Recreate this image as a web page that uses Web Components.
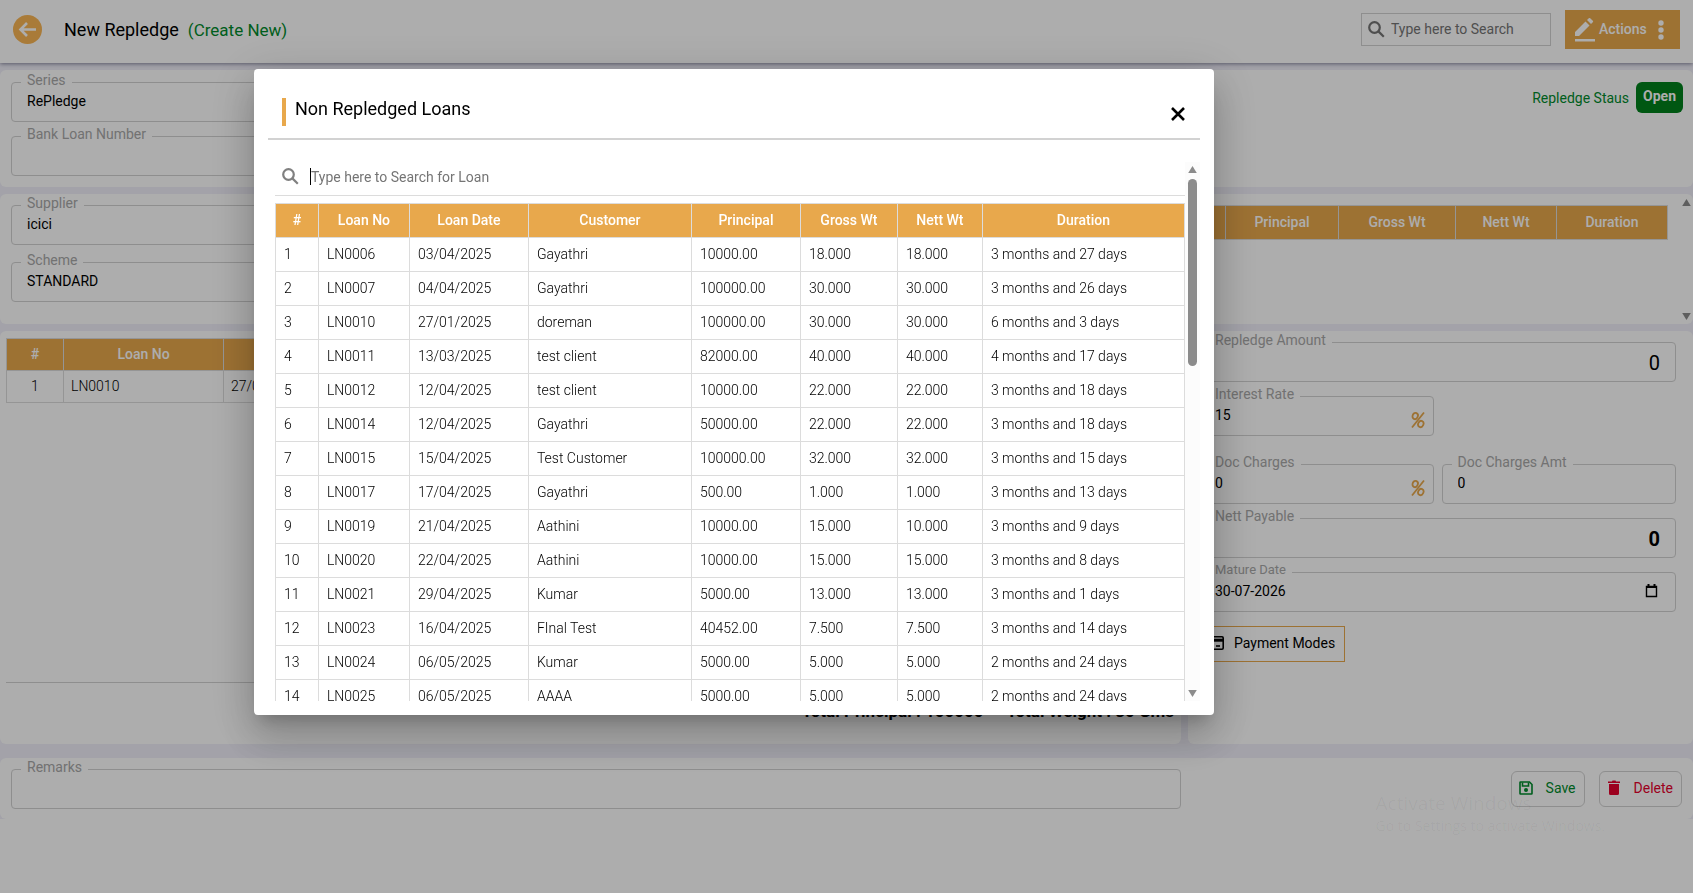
<!DOCTYPE html>
<html lang="en">
<head>
    <meta charset="UTF-8">
    <meta name="viewport" content="width=device-width, initial-scale=1.0">
    <title>New Repledge</title>
    <style>
        body {
            margin: 0;
            background-color: #fff;
            color: #000;
            font: 14px/20px Roboto, "Liberation Sans", sans-serif;
            --gold: #e8a84c;
            --line: #d2d2d2;
        }
    </style>
</head>
<body>
    <repledge-page></repledge-page>
    <loan-dialog heading="Non Repledged Loans">
        <loan-search slot="search"></loan-search>
        <loan-table id="loans"></loan-table>
    </loan-dialog>

    <script>
        const define = (name, html, setup) => {
            const template = document.createElement('template');
            template.innerHTML = html;
            customElements.define(name, class extends HTMLElement {
                constructor() {
                    super();
                    this.attachShadow({ mode: 'open' }).appendChild(template.content.cloneNode(true));
                }
                connectedCallback() {
                    if (setup) setup(this, this.shadowRoot);
                }
            });
        };

        // Outlined input with its label set into the top border
        define('outlined-field', `
            <style>
                :host { display: block; min-width: 0; }
                fieldset {
                    box-sizing: border-box;
                    height: 50px;
                    min-width: 0;
                    margin: 0;
                    padding: 0 9px;
                    border: 1px solid var(--line);
                    border-radius: 4px;
                }
                legend { padding: 0 6px 4px; color: #a8a8a8; font-size: 14px; line-height: 16px; }
                .row { display: flex; align-items: center; height: 18px; padding: 0 6px; }
                input {
                    flex: 1;
                    min-width: 0;
                    padding: 0;
                    border: 0;
                    outline: 0;
                    background: none;
                    color: inherit;
                    font: inherit;
                }
                :host([total]) .row { height: 22px; }
                :host([total]) input { font-size: 20px; text-align: right; }
                :host([strong]) input { font-weight: 700; }
                :host([small]) legend { font-size: 13px; }
            </style>
            <fieldset>
                <legend><label for="control"></label></legend>
                <div class="row"><input id="control" type="text"><slot></slot></div>
            </fieldset>
        `, (host, root) => {
            root.querySelector('label').textContent = host.getAttribute('label');
            root.querySelector('input').value = host.getAttribute('value') || '';
        });

        define('percent-icon', `
            <style>
                :host { display: block; width: 16px; height: 18px; padding-top: 10px; margin-right: -8px; }
                svg { display: block; }
            </style>
            <svg width="16" height="18" viewBox="0 0 16 18" fill="none" stroke="#e8a84c" stroke-width="1.8">
                <ellipse cx="5.2" cy="5" rx="2.6" ry="3.2" transform="rotate(25 5.2 5)"/>
                <ellipse cx="10.8" cy="13" rx="2.6" ry="3.2" transform="rotate(25 10.8 13)"/>
                <path d="M14 1.5 2 16.5"/>
            </svg>
        `);

        define('page-header', `
            <style>
                :host {
                    position: relative;
                    display: flex;
                    align-items: center;
                    height: 63px;
                    box-sizing: border-box;
                    padding: 0 13px 4px;
                    background: #fff;
                    box-shadow: 0 1px 4px rgba(60, 60, 90, .6);
                }
                button { border: 0; padding: 0; font: inherit; }
                svg { display: block; }
                .back { width: 29px; height: 29px; background: none; }
                h1 { margin: 0 9px 0 22px; font-size: 18px; font-weight: 400; line-height: 24px; }
                .mode { flex: 1; color: #008b2c; font-size: 17px; line-height: 24px; }
                .search {
                    display: flex;
                    align-items: center;
                    box-sizing: border-box;
                    width: 190px;
                    height: 33px;
                    margin-right: 14px;
                    padding: 0 6px;
                    border: 1px solid var(--line);
                    gap: 6px;
                }
                .search input { flex: 1; min-width: 0; padding: 0 0 1px; border: 0; background: none; font: inherit; }
                .search input::placeholder { color: #757575; }
                .actions {
                    display: flex;
                    align-items: center;
                    width: 115px;
                    height: 39px;
                    padding: 0 10px;
                    background: var(--gold);
                    color: #fff;
                    font-weight: 500;
                }
                .actions span { flex: 1; padding: 0 0 2px 4px; text-align: left; }
            </style>
            <button class="back" aria-label="Back">
                <svg width="29" height="29" viewBox="0 0 29 29">
                    <circle cx="14.500" cy="14.500" r="14.500" fill="#fab654"/>
                    <path d="M23 14.500H7.500M14 8l-6.500 6.500L14 21" fill="none" stroke="#fff" stroke-width="2.600"/>
                </svg>
            </button>
            <h1>New Repledge</h1>
            <span class="mode">(Create New)</span>
            <label class="search">
                <svg width="17" height="17" viewBox="0 0 17 17" fill="none" stroke="#757575" stroke-width="2.200">
                    <circle cx="6.500" cy="6.500" r="5.300"/><path d="m10.400 10.400 5.400 5.400"/>
                </svg>
                <input type="text" placeholder="Type here to Search" aria-label="Search">
            </label>
            <button class="actions">
                <svg width="20" height="24" viewBox="0 0 20 24" fill="#fff">
                    <path d="M0 14v4h4L14.500 7.500l-4-4zM12 2l4 4 1.800-1.800a1 1 0 0 0 0-1.400L15.200.3a1 1 0 0 0-1.400 0z"/>
                    <path d="M0 21h20v2.500H0z"/>
                </svg>
                <span>Actions</span>
                <svg width="18" height="20" viewBox="0 0 18 20" fill="#fff">
                    <circle cx="9" cy="3" r="2.700"/><circle cx="9" cy="10" r="2.700"/><circle cx="9" cy="17" r="2.700"/>
                </svg>
            </button>
        `);

        define('page-panel', `
            <style>
                :host {
                    display: block;
                    box-sizing: border-box;
                    min-width: 0;
                    border-radius: 6px;
                    background: #fff;
                }
            </style>
            <slot></slot>
        `);

        define('repledge-page', `
            <style>
                :host { display: block; }
                main { display: flex; flex-direction: column; gap: 7px; padding-top: 7px; background: #f0eff9; }
                svg { display: block; }
                button { font: inherit; }
                .half { width: 400px; display: grid; }
                .status { display: flex; justify-content: space-between; align-items: flex-start; padding: 2px 10px 11px 11px; }
                .status .half { gap: 4px; }
                .state { display: flex; align-items: center; gap: 7px; margin-top: 10px; color: #008b2c; }
                .state b { padding: 4px 7px 6px; border-radius: 6px; background: #00801b; color: #fff; line-height: 21px; }
                .bank { display: flex; justify-content: space-between; height: 130px; padding: 1px 2px 0 11px; }
                .bank .half { gap: 7px; align-content: start; }
                .preview { display: flex; gap: 14px; margin-top: 10px; }
                .bar { display: flex; flex-direction: column; justify-content: space-between; padding-bottom: 3px; }
                .bar, .bar svg { width: 9px; }
                .bar { margin-top: -7px; }
                table { border-collapse: collapse; table-layout: fixed; }
                th, td { box-sizing: border-box; border: 1px solid #dcdcdc; padding: 0 0 2px; }
                th { height: 34px; background: var(--gold); color: #fff; font-weight: 500; }
                td { height: 32px; padding: 0 7px 1px; font-weight: 300; }
                td:first-child { text-align: center; }
                .picked { width: 100%; }
                .picked th { height: 32px; }
                .columns { display: grid; grid-template-columns: minmax(0, 1fr) 505px; gap: 7px; min-height: 413px; }
                .loans { display: flex; flex-direction: column; padding: 7px 7px 0 6px; }
                .totals {
                    display: flex;
                    justify-content: flex-end;
                    gap: 23px;
                    height: 62px;
                    margin-top: auto;
                    border-top: 1px solid var(--line);
                    font-size: 17px;
                    font-weight: 700;
                    line-height: 56px;
                    box-sizing: border-box;
                }
                .amounts { display: flex; flex-direction: column; gap: 4px; padding: 1px 17px 0 11px; }
                .pair { display: grid; grid-template-columns: 1fr 1fr; gap: 8px; }
                .rate { margin-bottom: 14px; }
                .pay {
                    display: flex;
                    align-items: center;
                    align-self: flex-start;
                    gap: 10px;
                    height: 36px;
                    margin-top: 10px;
                    padding: 0 9px 2px 6px;
                    border: 1px solid var(--gold);
                    background: none;
                    color: inherit;
                }
                .remarks { display: flex; margin-top: 7px; padding: 1px 11px 10px; }
                .remarks outlined-field { flex: 1; }
                .buttons { display: flex; align-items: flex-start; justify-content: flex-end; gap: 14px; width: 501px; padding-top: 12px; }
                .buttons button {
                    display: flex;
                    align-items: center;
                    gap: 12px;
                    height: 36px;
                    padding: 0 8px 2px 6px;
                    border: 1px solid #d2d2d2;
                    border-radius: 6px;
                    background: none;
                }
                .save { color: #008b2c; }
                .delete { color: #e6002d; }
                .watermark {
                    position: absolute;
                    right: 88px;
                    top: 790px;
                    color: rgba(0, 0, 0, .04);
                    font: 14px/20px "Open Sans", sans-serif;
                }
                .watermark p { margin: 0; }
                .watermark p:first-child { font-size: 19px; line-height: 26px; }
            </style>
            <page-header></page-header>
            <main>
                <page-panel class="status">
                    <div class="half">
                        <outlined-field label="Series" value="RePledge"></outlined-field>
                        <outlined-field label="Bank Loan Number"></outlined-field>
                    </div>
                    <div class="state">Repledge Staus <b>Open</b></div>
                </page-panel>
                <page-panel class="bank">
                    <div class="half">
                        <outlined-field label="Supplier" value="icici"></outlined-field>
                        <outlined-field label="Scheme" value="STANDARD"></outlined-field>
                    </div>
                    <div class="preview">
                        <div>
                            <table>
                                <colgroup><col width="150"><col width="113"><col width="117"><col width="101"><col width="111"></colgroup>
                                <tr><th></th><th>Principal</th><th>Gross Wt</th><th>Nett Wt</th><th>Duration</th></tr>
                            </table>
                        </div>
                        <div class="bar">
                            <svg height="9" viewBox="0 0 9 9" fill="#8b8b8b"><path d="M4.500 1 8.800 8H.2z"/></svg>
                            <svg height="9" viewBox="0 0 9 9" fill="#8b8b8b"><path d="M.2 1h8.600l-4.300 7z"/></svg>
                        </div>
                    </div>
                </page-panel>
                <div class="columns">
                    <page-panel class="loans">
                        <table class="picked">
                            <colgroup><col width="57"><col width="160"><col></colgroup>
                            <tr><th>#</th><th>Loan No</th><th></th></tr>
                            <tr><td>1</td><td>LN0010</td><td>27/01/2025</td></tr>
                        </table>
                        <div class="totals"><span>Total Principal : 100000</span><span>Total Weight : 30 Gms</span></div>
                    </page-panel>
                    <page-panel class="amounts">
                        <outlined-field total label="Repledge Amount" value="0"></outlined-field>
                        <div class="pair rate">
                            <outlined-field label="Interest Rate" value="15"><percent-icon></percent-icon></outlined-field>
                        </div>
                        <div class="pair">
                            <outlined-field label="Doc Charges" value="0"><percent-icon></percent-icon></outlined-field>
                            <outlined-field label="Doc Charges Amt" value="0"></outlined-field>
                        </div>
                        <outlined-field total strong label="Nett Payable" value="0"></outlined-field>
                        <outlined-field small label="Mature Date" value="30-07-2026">
                            <svg width="17" height="14" viewBox="0 0 17 14" fill="none" stroke="#000">
                                <path d="M3.500 2.500h10v10h-10z" stroke-width="1.400"/><path d="M3 3h11M5.500 0v3M11.500 0v3" stroke-width="2"/>
                            </svg>
                        </outlined-field>
                        <button class="pay">
                            <svg width="18" height="14" viewBox="0 0 18 14" fill="none" stroke="#000" stroke-width="1.600">
                                <rect x=".8" y=".8" width="16.400" height="12.400" rx="1.200"/><path d="M1 4.200h16" stroke-width="3"/><path d="M10 10h4"/>
                            </svg>
                            Payment Modes
                        </button>
                    </page-panel>
                </div>
                <page-panel class="remarks">
                    <outlined-field label="Remarks"></outlined-field>
                    <div class="buttons">
                        <button class="save">
                            <svg width="16" height="16" viewBox="0 0 16 16" fill="none" stroke="currentColor" stroke-width="1.600">
                                <path d="M2.500 2h9L14 4.500v9a.5.5 0 0 1-.5.5h-11a.5.5 0 0 1-.5-.5v-11a.5.5 0 0 1 .5-.5z"/><path d="M4.500 2.500V6h6V2.500"/>
                                <circle cx="8" cy="10" r="2" fill="currentColor" stroke="none"/>
                            </svg>
                            Save
                        </button>
                        <button class="delete">
                            <svg width="16" height="16" viewBox="0 0 16 16" fill="currentColor">
                                <path d="M2 1.500h4L6.500.5h3l.5 1h4V3H2zM3 4h10v9.500a1.500 1.500 0 0 1-1.500 1.500h-7A1.500 1.500 0 0 1 3 13.500z"/>
                            </svg>
                            Delete
                        </button>
                    </div>
                </page-panel>
            </main>
            <div class="watermark"><p>Activate Windows</p><p>Go to Settings to activate Windows.</p></div>
        `);

        define('loan-dialog', `
            <style>
                :host {
                    position: fixed;
                    inset: 0;
                    display: flex;
                    align-items: flex-start;
                    box-sizing: border-box;
                    padding: 69px 15% 0;
                    background: rgba(0, 0, 0, .32);
                }
                section {
                    flex: none;
                    box-sizing: border-box;
                    width: 960px;
                    max-width: 85vw;
                    padding: 14px;
                    border-radius: 4px;
                    background: #fff;
                    box-shadow: 0 11px 15px -7px rgba(0, 0, 0, .2), 0 24px 38px 3px rgba(0, 0, 0, .14), 0 9px 46px 8px rgba(0, 0, 0, .12);
                }
                header {
                    display: flex;
                    justify-content: space-between;
                    align-items: center;
                    padding: 15px 14px 12px;
                    border-bottom: 2px solid #d2d2d2;
                }
                h2 {
                    margin: 0;
                    padding: 0 0 6px 9px;
                    border-left: 4px solid var(--gold);
                    font-size: 18px;
                    font-weight: 400;
                    line-height: 22px;
                }
                button { padding: 4px 1px 0; border: 0; background: none; }
                svg { display: block; }
                .body { display: flex; height: calc(100vh - 354px); margin-top: 22px; }
                .scroll { flex: 1; min-width: 0; padding-left: 7px; overflow-y: auto; scrollbar-width: none; }
                .bar {
                    display: flex;
                    flex-direction: column;
                    align-items: center;
                    box-sizing: border-box;
                    width: 15px;
                    padding: 3px 0;
                    background: #fcfcfc;
                }
                .thumb { width: 9px; height: 35%; margin: 5px 0 auto; border-radius: 5px; background: #8b8b8b; }
            </style>
            <section role="dialog" aria-labelledby="heading">
                <header>
                    <h2 id="heading"></h2>
                    <button aria-label="Close">
                        <svg width="14" height="14" viewBox="0 0 14 14" fill="none" stroke="#000" stroke-width="2.600"><path d="m1 1 12 12M13 1 1 13"/></svg>
                    </button>
                </header>
                <div class="body">
                    <div class="scroll"><slot name="search"></slot><slot></slot></div>
                    <div class="bar">
                        <svg width="9" height="9" viewBox="0 0 9 9" fill="#8b8b8b"><path d="M4.500 1 8.800 8H.2z"/></svg>
                        <div class="thumb"></div>
                        <svg width="9" height="9" viewBox="0 0 9 9" fill="#8b8b8b"><path d="M.2 1h8.600l-4.300 7z"/></svg>
                    </div>
                </div>
            </section>
        `, (host, root) => {
            root.querySelector('h2').textContent = host.getAttribute('heading');
        });

        define('loan-search', `
            <style>
                :host { display: block; padding: 6px 7px 10px; border-bottom: 1px solid #dcdcdc; margin-bottom: 7px; }
                label { display: flex; align-items: center; gap: 11px; height: 17px; }
                input {
                    flex: 1;
                    height: 17px;
                    padding: 0;
                    border: 0;
                    border-left: 1px solid #000;
                    outline: 0;
                    font: inherit;
                }
                input::placeholder { color: #757575; }
            </style>
            <label>
                <svg width="17" height="17" viewBox="0 0 17 17" fill="none" stroke="#808080" stroke-width="2.200">
                    <circle cx="6.500" cy="6.500" r="5.300"/><path d="m10.400 10.400 5.400 5.400"/>
                </svg>
                <input type="text" placeholder="Type here to Search for Loan" aria-label="Search for Loan">
            </label>
        `);

        const loans = [
            ['LN0006', '03/04/2025', 'Gayathri', '10000.00', '18.000', '18.000', '3 months and 27 days'],
            ['LN0007', '04/04/2025', 'Gayathri', '100000.00', '30.000', '30.000', '3 months and 26 days'],
            ['LN0010', '27/01/2025', 'doreman', '100000.00', '30.000', '30.000', '6 months and 3 days'],
            ['LN0011', '13/03/2025', 'test client', '82000.00', '40.000', '40.000', '4 months and 17 days'],
            ['LN0012', '12/04/2025', 'test client', '10000.00', '22.000', '22.000', '3 months and 18 days'],
            ['LN0014', '12/04/2025', 'Gayathri', '50000.00', '22.000', '22.000', '3 months and 18 days'],
            ['LN0015', '15/04/2025', 'Test Customer', '100000.00', '32.000', '32.000', '3 months and 15 days'],
            ['LN0017', '17/04/2025', 'Gayathri', '500.00', '1.000', '1.000', '3 months and 13 days'],
            ['LN0019', '21/04/2025', 'Aathini', '10000.00', '15.000', '10.000', '3 months and 9 days'],
            ['LN0020', '22/04/2025', 'Aathini', '10000.00', '15.000', '15.000', '3 months and 8 days'],
            ['LN0021', '29/04/2025', 'Kumar', '5000.00', '13.000', '13.000', '3 months and 1 days'],
            ['LN0023', '16/04/2025', 'FInal Test', '40452.00', '7.500', '7.500', '3 months and 14 days'],
            ['LN0024', '06/05/2025', 'Kumar', '5000.00', '5.000', '5.000', '2 months and 24 days'],
            ['LN0025', '06/05/2025', 'AAAA', '5000.00', '5.000', '5.000', '2 months and 24 days']
        ];

        define('loan-table', `
            <style>
                :host { display: block; }
                table { width: 100%; border-collapse: collapse; table-layout: fixed; }
                th, td { box-sizing: border-box; height: 34px; padding: 0 8px 2px; border: 1px solid #dcdcdc; }
                th { background: var(--gold); color: #fff; font-weight: 500; }
                td { font-weight: 300; }
            </style>
            <table>
                <colgroup><col width="43"><col width="91"><col width="119"><col width="163"><col width="109"><col width="97"><col width="85"><col></colgroup>
                <thead><tr><th>#</th><th>Loan No</th><th>Loan Date</th><th>Customer</th><th>Principal</th><th>Gross Wt</th><th>Nett Wt</th><th>Duration</th></tr></thead>
                <tbody></tbody>
            </table>
        `, (host, root) => {
            root.querySelector('tbody').innerHTML = loans.map((loan, i) =>
                `<tr><td>${i + 1}</td>${loan.map(cell => `<td>${cell}</td>`).join('')}</tr>`).join('');
        });
    </script>
</body>
</html>
